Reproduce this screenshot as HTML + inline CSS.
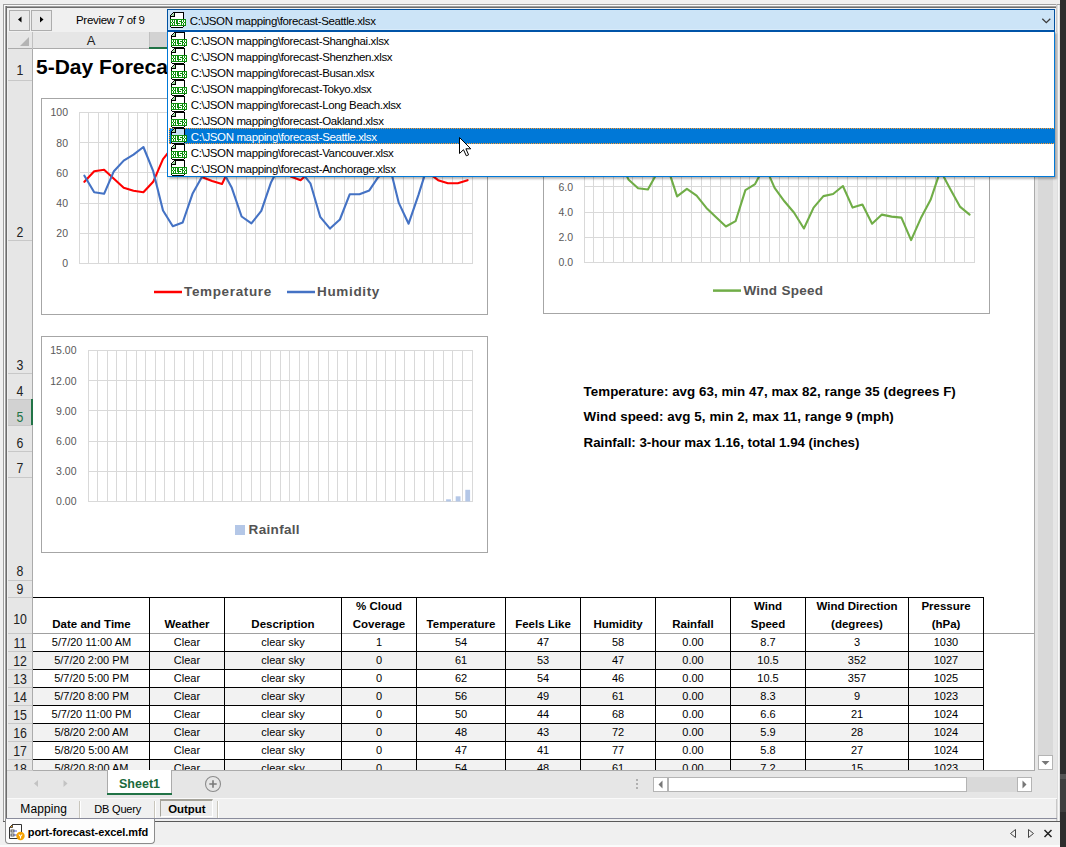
<!DOCTYPE html>
<html><head><meta charset="utf-8">
<style>
*{box-sizing:border-box}
html,body{margin:0;padding:0}
body{width:1066px;height:847px;background:#f0f0f0;position:relative;overflow:hidden;font-family:"Liberation Sans",sans-serif;color:#000}
.a{position:absolute}
.t{position:absolute;white-space:pre}
svg{position:absolute;overflow:visible}
</style></head><body>
<div class="a" style="left:1060px;top:0px;width:6px;height:847px;background:#2d2d2d;"></div>
<div class="a" style="left:1060px;top:774px;width:6px;height:5px;background:#545454;"></div>
<div class="a" style="left:1060px;top:779px;width:6px;height:33px;background:#3e3e3e;"></div>
<div class="a" style="left:3px;top:4px;width:1057px;height:1px;background:#a0a0a0;"></div>
<div class="a" style="left:3px;top:4px;width:1px;height:818px;background:#a0a0a0;"></div>
<div class="a" style="left:4px;top:5px;width:1055px;height:1px;background:#fafafa;"></div>
<div class="a" style="left:4px;top:5px;width:1px;height:816px;background:#fafafa;"></div>
<div class="a" style="left:5px;top:6px;width:1052px;height:1px;background:#a0a0a0;"></div>
<div class="a" style="left:5px;top:7px;width:1052px;height:1px;background:#6d6d6d;"></div>
<div class="a" style="left:5px;top:6px;width:1px;height:813px;background:#a0a0a0;"></div>
<div class="a" style="left:6px;top:6px;width:1px;height:813px;background:#6d6d6d;"></div>
<div class="a" style="left:1056px;top:4px;width:1px;height:818px;background:#c8c8c8;"></div>
<div class="a" style="left:1057px;top:5px;width:3px;height:816px;background:#f8f8f8;"></div>
<div class="a" style="left:1057px;top:5px;width:1px;height:816px;background:#dedede;"></div>
<div class="a" style="left:1059px;top:5px;width:1px;height:816px;background:#e2e2e2;"></div>
<div class="a" style="left:6px;top:818px;width:1051px;height:1px;background:#8f90a0;"></div>
<div class="a" style="left:3px;top:821px;width:1057px;height:1px;background:#5a5a5a;"></div>
<div class="a" style="left:0px;top:845px;width:1060px;height:2px;background:#fbfbfb;"></div>
<div class="a" style="left:9px;top:10px;width:21px;height:21px;background:#e9e9e9;border:1px solid #adadad"></div>
<div class="a" style="left:31px;top:10px;width:21px;height:21px;background:#e9e9e9;border:1px solid #adadad"></div>
<svg style="left:0;top:0" width="60" height="40"><path d="M21.5 16.5 L18 19.5 L21.5 22.5Z" fill="#000"/><path d="M40 16.5 L43.5 19.5 L40 22.5Z" fill="#000"/></svg>
<div class="t" style="left:76px;top:14.57px;font-size:11.5px;line-height:11.5px;font-weight:normal;color:#000;letter-spacing:-0.3px;">Preview 7 of 9</div>
<div class="a" style="left:8px;top:32px;width:1027px;height:17px;background:#e6e6e6;"></div>
<div class="a" style="left:8px;top:48px;width:1027px;height:1px;background:#ababab;"></div>
<svg style="left:8px;top:32px" width="25" height="17"><path d="M21 5 L21 14 L12 14Z" fill="#b4b4b4"/></svg>
<div class="a" style="left:32px;top:32px;width:1px;height:17px;background:#c0c0c0;"></div>
<div class="t" style="left:41.0px;width:100px;text-align:center;top:34.00px;font-size:13px;line-height:13px;font-weight:normal;color:#222;">A</div>
<div class="a" style="left:149px;top:32px;width:1px;height:16px;background:#c0c0c0;"></div>
<div class="a" style="left:150px;top:32px;width:74px;height:15px;background:#d2d2d2;"></div>
<div class="a" style="left:149px;top:47px;width:76px;height:2px;background:#217346;"></div>
<div class="a" style="left:8px;top:49px;width:24px;height:722px;background:#e6e6e6;"></div>
<div class="a" style="left:32px;top:49px;width:1px;height:722px;background:#ababab;"></div>
<div class="a" style="left:8px;top:80px;width:24px;height:1px;background:#c8c8c8;"></div>
<div class="t" style="left:8.3px;width:24px;text-align:center;top:63.15px;font-size:14px;line-height:14px;font-weight:normal;color:#222;transform:scaleX(0.88)">1</div>
<div class="a" style="left:8px;top:240px;width:24px;height:1px;background:#c8c8c8;"></div>
<div class="t" style="left:8.3px;width:24px;text-align:center;top:225.15px;font-size:14px;line-height:14px;font-weight:normal;color:#222;transform:scaleX(0.88)">2</div>
<div class="a" style="left:8px;top:373px;width:24px;height:1px;background:#c8c8c8;"></div>
<div class="t" style="left:8.3px;width:24px;text-align:center;top:357.65px;font-size:14px;line-height:14px;font-weight:normal;color:#222;transform:scaleX(0.88)">3</div>
<div class="a" style="left:8px;top:399px;width:24px;height:1px;background:#c8c8c8;"></div>
<div class="t" style="left:8.3px;width:24px;text-align:center;top:383.65px;font-size:14px;line-height:14px;font-weight:normal;color:#222;transform:scaleX(0.88)">4</div>
<div class="a" style="left:8px;top:425px;width:24px;height:1px;background:#c8c8c8;"></div>
<div class="a" style="left:8px;top:400px;width:23px;height:25px;background:#d2d2d2;"></div>
<div class="a" style="left:31px;top:399px;width:2px;height:26px;background:#217346;"></div>
<div class="t" style="left:8.3px;width:24px;text-align:center;top:409.95px;font-size:14px;line-height:14px;font-weight:normal;color:#217346;transform:scaleX(0.88)">5</div>
<div class="a" style="left:8px;top:451px;width:24px;height:1px;background:#c8c8c8;"></div>
<div class="t" style="left:8.3px;width:24px;text-align:center;top:435.75px;font-size:14px;line-height:14px;font-weight:normal;color:#222;transform:scaleX(0.88)">6</div>
<div class="a" style="left:8px;top:477px;width:24px;height:1px;background:#c8c8c8;"></div>
<div class="t" style="left:8.3px;width:24px;text-align:center;top:461.15px;font-size:14px;line-height:14px;font-weight:normal;color:#222;transform:scaleX(0.88)">7</div>
<div class="a" style="left:8px;top:580px;width:24px;height:1px;background:#c8c8c8;"></div>
<div class="t" style="left:8.3px;width:24px;text-align:center;top:564.15px;font-size:14px;line-height:14px;font-weight:normal;color:#222;transform:scaleX(0.88)">8</div>
<div class="a" style="left:8px;top:597px;width:24px;height:1px;background:#c8c8c8;"></div>
<div class="t" style="left:8.3px;width:24px;text-align:center;top:581.65px;font-size:14px;line-height:14px;font-weight:normal;color:#222;transform:scaleX(0.88)">9</div>
<div class="a" style="left:8px;top:633px;width:24px;height:1px;background:#c8c8c8;"></div>
<div class="t" style="left:8.3px;width:24px;text-align:center;top:612.35px;font-size:14px;line-height:14px;font-weight:normal;color:#222;transform:scaleX(0.88)">10</div>
<div class="a" style="left:8px;top:651px;width:24px;height:1px;background:#c8c8c8;"></div>
<div class="t" style="left:8.3px;width:24px;text-align:center;top:636.15px;font-size:14px;line-height:14px;font-weight:normal;color:#222;transform:scaleX(0.88)">11</div>
<div class="a" style="left:8px;top:669px;width:24px;height:1px;background:#c8c8c8;"></div>
<div class="t" style="left:8.3px;width:24px;text-align:center;top:653.65px;font-size:14px;line-height:14px;font-weight:normal;color:#222;transform:scaleX(0.88)">12</div>
<div class="a" style="left:8px;top:687px;width:24px;height:1px;background:#c8c8c8;"></div>
<div class="t" style="left:8.3px;width:24px;text-align:center;top:671.65px;font-size:14px;line-height:14px;font-weight:normal;color:#222;transform:scaleX(0.88)">13</div>
<div class="a" style="left:8px;top:705px;width:24px;height:1px;background:#c8c8c8;"></div>
<div class="t" style="left:8.3px;width:24px;text-align:center;top:689.65px;font-size:14px;line-height:14px;font-weight:normal;color:#222;transform:scaleX(0.88)">14</div>
<div class="a" style="left:8px;top:723px;width:24px;height:1px;background:#c8c8c8;"></div>
<div class="t" style="left:8.3px;width:24px;text-align:center;top:707.65px;font-size:14px;line-height:14px;font-weight:normal;color:#222;transform:scaleX(0.88)">15</div>
<div class="a" style="left:8px;top:741px;width:24px;height:1px;background:#c8c8c8;"></div>
<div class="t" style="left:8.3px;width:24px;text-align:center;top:725.65px;font-size:14px;line-height:14px;font-weight:normal;color:#222;transform:scaleX(0.88)">16</div>
<div class="a" style="left:8px;top:759px;width:24px;height:1px;background:#c8c8c8;"></div>
<div class="t" style="left:8.3px;width:24px;text-align:center;top:743.65px;font-size:14px;line-height:14px;font-weight:normal;color:#222;transform:scaleX(0.88)">17</div>
<div class="a" style="left:8px;top:777px;width:24px;height:1px;background:#c8c8c8;"></div>
<div class="t" style="left:8.3px;width:24px;text-align:center;top:761.65px;font-size:14px;line-height:14px;font-weight:normal;color:#222;transform:scaleX(0.88)">18</div>
<div class="a" style="left:33px;top:49px;width:1002px;height:721px;background:#fff;"></div>
<div class="a" style="left:1034px;top:49px;width:1px;height:722px;background:#ababab;"></div>
<div class="a" style="left:33px;top:770px;width:1002px;height:1px;background:#ababab;"></div>
<div class="t" style="left:36px;top:56.32px;font-size:21px;line-height:21px;font-weight:bold;color:#000;">5-Day Forecast for Seattle</div>
<svg style="left:0;top:0" width="1066" height="847"><rect x="41.5" y="98.5" width="446" height="216" fill="#fff" stroke="#a6a6a6"/><rect x="543.5" y="97.5" width="446" height="216" fill="#fff" stroke="#a6a6a6"/><rect x="41.5" y="336.5" width="446" height="216" fill="#fff" stroke="#a6a6a6"/><path d="M79.5 112V264M88.5 112V264M98.5 112V264M108.5 112V264M118.5 112V264M128.5 112V264M137.5 112V264M147.5 112V264M157.5 112V264M167.5 112V264M177.5 112V264M187.5 112V264M196.5 112V264M206.5 112V264M216.5 112V264M226.5 112V264M236.5 112V264M246.5 112V264M255.5 112V264M265.5 112V264M275.5 112V264M285.5 112V264M295.5 112V264M304.5 112V264M314.5 112V264M324.5 112V264M334.5 112V264M344.5 112V264M354.5 112V264M363.5 112V264M373.5 112V264M383.5 112V264M393.5 112V264M403.5 112V264M413.5 112V264M422.5 112V264M432.5 112V264M442.5 112V264M452.5 112V264M462.5 112V264M472.5 112V264M79 112.5H473M79 142.5H473M79 172.5H473M79 203.5H473M79 233.5H473M79 263.5H473M584.5 111V263M593.5 111V263M603.5 111V263M613.5 111V263M623.5 111V263M632.5 111V263M642.5 111V263M652.5 111V263M662.5 111V263M671.5 111V263M681.5 111V263M691.5 111V263M701.5 111V263M710.5 111V263M720.5 111V263M730.5 111V263M740.5 111V263M749.5 111V263M759.5 111V263M769.5 111V263M779.5 111V263M788.5 111V263M798.5 111V263M808.5 111V263M818.5 111V263M827.5 111V263M837.5 111V263M847.5 111V263M857.5 111V263M866.5 111V263M876.5 111V263M886.5 111V263M896.5 111V263M905.5 111V263M915.5 111V263M925.5 111V263M935.5 111V263M944.5 111V263M954.5 111V263M964.5 111V263M974.5 111V263M584 111.5H975M584 136.5H975M584 161.5H975M584 186.5H975M584 212.5H975M584 237.5H975M584 262.5H975M88.5 350V502M97.5 350V502M107.5 350V502M116.5 350V502M126.5 350V502M136.5 350V502M145.5 350V502M155.5 350V502M164.5 350V502M174.5 350V502M184.5 350V502M193.5 350V502M203.5 350V502M212.5 350V502M222.5 350V502M232.5 350V502M241.5 350V502M251.5 350V502M260.5 350V502M270.5 350V502M280.5 350V502M289.5 350V502M299.5 350V502M308.5 350V502M318.5 350V502M328.5 350V502M337.5 350V502M347.5 350V502M356.5 350V502M366.5 350V502M376.5 350V502M385.5 350V502M395.5 350V502M404.5 350V502M414.5 350V502M424.5 350V502M433.5 350V502M443.5 350V502M452.5 350V502M462.5 350V502M472.5 350V502M88 350.5H473M88 380.5H473M88 410.5H473M88 441.5H473M88 471.5H473M88 501.5H473" stroke="#d9d9d9" stroke-width="1" fill="none"/><polyline points="84.4,181.8 94.2,171.2 104.1,169.7 113.9,178.7 123.7,187.8 133.5,190.8 143.4,192.3 153.2,181.8 163.0,159.1 172.8,147.0 182.7,142.5 192.5,144.0 202.3,177.2 212.1,181.0 222.0,184.0 231.8,163.6 241.6,150.1 251.4,142.5 261.3,139.5 271.1,151.6 280.9,169.7 290.7,176.5 300.6,180.2 310.4,171.2 320.2,157.6 330.0,148.5 339.9,145.5 349.7,154.6 359.5,166.7 369.3,172.7 379.2,176.5 389.0,169.7 398.8,157.6 408.6,150.1 418.5,156.1 428.3,172.7 438.1,180.2 447.9,183.3 457.8,183.3 467.6,180.2" fill="none" stroke="#ff0000" stroke-width="2.1" stroke-linejoin="round" stroke-linecap="round"/><polyline points="84.4,175.7 94.2,192.3 104.1,193.8 113.9,171.2 123.7,160.6 133.5,154.6 143.4,147.0 153.2,171.2 163.0,210.5 172.8,226.3 182.7,222.5 192.5,193.8 202.3,176.2 212.1,163.6 222.0,169.7 231.8,187.8 241.6,216.5 251.4,223.4 261.3,210.9 271.1,182.2 280.9,163.6 290.7,160.6 300.6,171.2 310.4,183.3 320.2,216.8 330.0,228.6 339.9,219.5 349.7,194.3 359.5,194.3 369.3,190.4 379.2,175.7 389.0,163.6 398.8,202.9 408.6,223.7 418.5,194.9 428.3,163.6 438.1,157.6 447.9,150.1 457.8,148.5 467.6,151.6" fill="none" stroke="#4472c4" stroke-width="2.1" stroke-linejoin="round" stroke-linecap="round"/><polyline points="589.4,153.0 599.1,130.4 608.9,130.4 618.6,158.1 628.4,179.4 638.1,188.3 647.9,189.5 657.6,171.9 667.4,166.9 677.1,196.4 686.9,188.9 696.6,195.6 706.4,207.9 716.1,217.3 725.9,226.5 735.6,221.2 745.4,190.1 755.1,184.1 764.9,165.6 774.6,187.8 784.4,201.3 794.1,212.8 803.9,228.5 813.6,207.6 823.4,196.1 833.1,194.0 842.9,186.0 852.6,207.6 862.4,204.5 872.1,223.7 881.9,214.6 891.6,216.6 901.4,217.6 911.1,240.1 920.9,218.1 930.6,199.8 940.4,170.6 950.1,188.8 959.9,206.6 969.6,214.6" fill="none" stroke="#70ad47" stroke-width="2.1" stroke-linejoin="round" stroke-linecap="round"/><rect x="446.1" y="499.3" width="4.8" height="2.2" fill="#b4c7e7"/><rect x="455.7" y="496.3" width="4.8" height="5.2" fill="#b4c7e7"/><rect x="465.3" y="489.8" width="4.8" height="11.7" fill="#b4c7e7"/><path d="M154 292H182" stroke="#ff0000" stroke-width="2.5"/><path d="M287 292H315" stroke="#4472c4" stroke-width="2.5"/><path d="M713 290.6H741" stroke="#70ad47" stroke-width="2.5"/><rect x="235" y="525" width="10" height="10" fill="#b4c7e7"/></svg>
<div class="t" style="left:28px;width:40px;text-align:right;top:107.41px;font-size:10.5px;line-height:10.5px;font-weight:normal;color:#595959;">100</div>
<div class="t" style="left:28px;width:40px;text-align:right;top:137.61px;font-size:10.5px;line-height:10.5px;font-weight:normal;color:#595959;">80</div>
<div class="t" style="left:28px;width:40px;text-align:right;top:167.81px;font-size:10.5px;line-height:10.5px;font-weight:normal;color:#595959;">60</div>
<div class="t" style="left:28px;width:40px;text-align:right;top:198.01px;font-size:10.5px;line-height:10.5px;font-weight:normal;color:#595959;">40</div>
<div class="t" style="left:28px;width:40px;text-align:right;top:228.21px;font-size:10.5px;line-height:10.5px;font-weight:normal;color:#595959;">20</div>
<div class="t" style="left:28px;width:40px;text-align:right;top:258.41px;font-size:10.5px;line-height:10.5px;font-weight:normal;color:#595959;">0</div>
<div class="t" style="left:533px;width:40px;text-align:right;top:106.41px;font-size:10.5px;line-height:10.5px;font-weight:normal;color:#595959;">12.0</div>
<div class="t" style="left:533px;width:40px;text-align:right;top:131.58px;font-size:10.5px;line-height:10.5px;font-weight:normal;color:#595959;">10.0</div>
<div class="t" style="left:533px;width:40px;text-align:right;top:156.75px;font-size:10.5px;line-height:10.5px;font-weight:normal;color:#595959;">8.0</div>
<div class="t" style="left:533px;width:40px;text-align:right;top:181.91px;font-size:10.5px;line-height:10.5px;font-weight:normal;color:#595959;">6.0</div>
<div class="t" style="left:533px;width:40px;text-align:right;top:207.08px;font-size:10.5px;line-height:10.5px;font-weight:normal;color:#595959;">4.0</div>
<div class="t" style="left:533px;width:40px;text-align:right;top:232.25px;font-size:10.5px;line-height:10.5px;font-weight:normal;color:#595959;">2.0</div>
<div class="t" style="left:533px;width:40px;text-align:right;top:257.41px;font-size:10.5px;line-height:10.5px;font-weight:normal;color:#595959;">0.0</div>
<div class="t" style="left:36.5px;width:40px;text-align:right;top:345.41px;font-size:10.5px;line-height:10.5px;font-weight:normal;color:#595959;">15.00</div>
<div class="t" style="left:36.5px;width:40px;text-align:right;top:375.61px;font-size:10.5px;line-height:10.5px;font-weight:normal;color:#595959;">12.00</div>
<div class="t" style="left:36.5px;width:40px;text-align:right;top:405.81px;font-size:10.5px;line-height:10.5px;font-weight:normal;color:#595959;">9.00</div>
<div class="t" style="left:36.5px;width:40px;text-align:right;top:436.01px;font-size:10.5px;line-height:10.5px;font-weight:normal;color:#595959;">6.00</div>
<div class="t" style="left:36.5px;width:40px;text-align:right;top:466.21px;font-size:10.5px;line-height:10.5px;font-weight:normal;color:#595959;">3.00</div>
<div class="t" style="left:36.5px;width:40px;text-align:right;top:496.41px;font-size:10.5px;line-height:10.5px;font-weight:normal;color:#595959;">0.00</div>
<div class="t" style="left:184px;top:285.27px;font-size:13.5px;line-height:13.5px;font-weight:bold;color:#535353;letter-spacing:0.65px;">Temperature</div>
<div class="t" style="left:317px;top:285.27px;font-size:13.5px;line-height:13.5px;font-weight:bold;color:#535353;letter-spacing:0.66px;">Humidity</div>
<div class="t" style="left:743.4px;top:284.17px;font-size:13.5px;line-height:13.5px;font-weight:bold;color:#535353;letter-spacing:0.28px;">Wind Speed</div>
<div class="t" style="left:248.6px;top:523.47px;font-size:13.5px;line-height:13.5px;font-weight:bold;color:#535353;letter-spacing:0.32px;">Rainfall</div>
<div class="t" style="left:583.6px;top:384.82px;font-size:13.33px;line-height:13.33px;font-weight:bold;color:#000;letter-spacing:0.05px;">Temperature: avg 63, min 47, max 82, range 35 (degrees F)</div>
<div class="t" style="left:583.6px;top:410.22px;font-size:13.33px;line-height:13.33px;font-weight:bold;color:#000;letter-spacing:0.08px;">Wind speed: avg 5, min 2, max 11, range 9 (mph)</div>
<div class="t" style="left:583.6px;top:435.52px;font-size:13.33px;line-height:13.33px;font-weight:bold;color:#000;letter-spacing:-0.045px;">Rainfall: 3-hour max 1.16, total 1.94 (inches)</div>
<div class="a" style="left:33px;top:652px;width:116px;height:17px;background:#f2f2f2;"></div>
<div class="a" style="left:150px;top:652px;width:74px;height:17px;background:#f2f2f2;"></div>
<div class="a" style="left:225px;top:652px;width:116px;height:17px;background:#f2f2f2;"></div>
<div class="a" style="left:342px;top:652px;width:74px;height:17px;background:#f2f2f2;"></div>
<div class="a" style="left:417px;top:652px;width:88px;height:17px;background:#f2f2f2;"></div>
<div class="a" style="left:506px;top:652px;width:74px;height:17px;background:#f2f2f2;"></div>
<div class="a" style="left:581px;top:652px;width:74px;height:17px;background:#f2f2f2;"></div>
<div class="a" style="left:656px;top:652px;width:74px;height:17px;background:#f2f2f2;"></div>
<div class="a" style="left:731px;top:652px;width:74px;height:17px;background:#f2f2f2;"></div>
<div class="a" style="left:806px;top:652px;width:102px;height:17px;background:#f2f2f2;"></div>
<div class="a" style="left:909px;top:652px;width:74px;height:17px;background:#f2f2f2;"></div>
<div class="a" style="left:33px;top:688px;width:116px;height:17px;background:#f2f2f2;"></div>
<div class="a" style="left:150px;top:688px;width:74px;height:17px;background:#f2f2f2;"></div>
<div class="a" style="left:225px;top:688px;width:116px;height:17px;background:#f2f2f2;"></div>
<div class="a" style="left:342px;top:688px;width:74px;height:17px;background:#f2f2f2;"></div>
<div class="a" style="left:417px;top:688px;width:88px;height:17px;background:#f2f2f2;"></div>
<div class="a" style="left:506px;top:688px;width:74px;height:17px;background:#f2f2f2;"></div>
<div class="a" style="left:581px;top:688px;width:74px;height:17px;background:#f2f2f2;"></div>
<div class="a" style="left:656px;top:688px;width:74px;height:17px;background:#f2f2f2;"></div>
<div class="a" style="left:731px;top:688px;width:74px;height:17px;background:#f2f2f2;"></div>
<div class="a" style="left:806px;top:688px;width:102px;height:17px;background:#f2f2f2;"></div>
<div class="a" style="left:909px;top:688px;width:74px;height:17px;background:#f2f2f2;"></div>
<div class="a" style="left:33px;top:724px;width:116px;height:17px;background:#f2f2f2;"></div>
<div class="a" style="left:150px;top:724px;width:74px;height:17px;background:#f2f2f2;"></div>
<div class="a" style="left:225px;top:724px;width:116px;height:17px;background:#f2f2f2;"></div>
<div class="a" style="left:342px;top:724px;width:74px;height:17px;background:#f2f2f2;"></div>
<div class="a" style="left:417px;top:724px;width:88px;height:17px;background:#f2f2f2;"></div>
<div class="a" style="left:506px;top:724px;width:74px;height:17px;background:#f2f2f2;"></div>
<div class="a" style="left:581px;top:724px;width:74px;height:17px;background:#f2f2f2;"></div>
<div class="a" style="left:656px;top:724px;width:74px;height:17px;background:#f2f2f2;"></div>
<div class="a" style="left:731px;top:724px;width:74px;height:17px;background:#f2f2f2;"></div>
<div class="a" style="left:806px;top:724px;width:102px;height:17px;background:#f2f2f2;"></div>
<div class="a" style="left:909px;top:724px;width:74px;height:17px;background:#f2f2f2;"></div>
<div class="a" style="left:33px;top:760px;width:116px;height:17px;background:#f2f2f2;"></div>
<div class="a" style="left:150px;top:760px;width:74px;height:17px;background:#f2f2f2;"></div>
<div class="a" style="left:225px;top:760px;width:116px;height:17px;background:#f2f2f2;"></div>
<div class="a" style="left:342px;top:760px;width:74px;height:17px;background:#f2f2f2;"></div>
<div class="a" style="left:417px;top:760px;width:88px;height:17px;background:#f2f2f2;"></div>
<div class="a" style="left:506px;top:760px;width:74px;height:17px;background:#f2f2f2;"></div>
<div class="a" style="left:581px;top:760px;width:74px;height:17px;background:#f2f2f2;"></div>
<div class="a" style="left:656px;top:760px;width:74px;height:17px;background:#f2f2f2;"></div>
<div class="a" style="left:731px;top:760px;width:74px;height:17px;background:#f2f2f2;"></div>
<div class="a" style="left:806px;top:760px;width:102px;height:17px;background:#f2f2f2;"></div>
<div class="a" style="left:909px;top:760px;width:74px;height:17px;background:#f2f2f2;"></div>
<div class="a" style="left:33px;top:597px;width:951px;height:1px;background:#000;"></div>
<div class="a" style="left:33px;top:651px;width:951px;height:1px;background:#000;"></div>
<div class="a" style="left:33px;top:669px;width:951px;height:1px;background:#000;"></div>
<div class="a" style="left:33px;top:687px;width:951px;height:1px;background:#000;"></div>
<div class="a" style="left:33px;top:705px;width:951px;height:1px;background:#000;"></div>
<div class="a" style="left:33px;top:723px;width:951px;height:1px;background:#000;"></div>
<div class="a" style="left:33px;top:741px;width:951px;height:1px;background:#000;"></div>
<div class="a" style="left:33px;top:759px;width:951px;height:1px;background:#000;"></div>
<div class="a" style="left:33px;top:633px;width:1001px;height:1px;background:#a0a0a0;"></div>
<div class="a" style="left:149px;top:597px;width:1px;height:173px;background:#000;"></div>
<div class="a" style="left:224px;top:597px;width:1px;height:173px;background:#000;"></div>
<div class="a" style="left:341px;top:597px;width:1px;height:173px;background:#000;"></div>
<div class="a" style="left:416px;top:597px;width:1px;height:173px;background:#000;"></div>
<div class="a" style="left:505px;top:597px;width:1px;height:173px;background:#000;"></div>
<div class="a" style="left:580px;top:597px;width:1px;height:173px;background:#000;"></div>
<div class="a" style="left:655px;top:597px;width:1px;height:173px;background:#000;"></div>
<div class="a" style="left:730px;top:597px;width:1px;height:173px;background:#000;"></div>
<div class="a" style="left:805px;top:597px;width:1px;height:173px;background:#000;"></div>
<div class="a" style="left:908px;top:597px;width:1px;height:173px;background:#000;"></div>
<div class="a" style="left:983px;top:597px;width:1px;height:173px;background:#000;"></div>
<div class="t" style="left:11.5px;width:160px;text-align:center;top:618.87px;font-size:11.5px;line-height:11.5px;font-weight:bold;color:#000;">Date and Time</div>
<div class="t" style="left:107.0px;width:160px;text-align:center;top:618.87px;font-size:11.5px;line-height:11.5px;font-weight:bold;color:#000;">Weather</div>
<div class="t" style="left:203.0px;width:160px;text-align:center;top:618.87px;font-size:11.5px;line-height:11.5px;font-weight:bold;color:#000;">Description</div>
<div class="t" style="left:299.0px;width:160px;text-align:center;top:600.87px;font-size:11.5px;line-height:11.5px;font-weight:bold;color:#000;">% Cloud</div>
<div class="t" style="left:299.0px;width:160px;text-align:center;top:618.87px;font-size:11.5px;line-height:11.5px;font-weight:bold;color:#000;">Coverage</div>
<div class="t" style="left:381.0px;width:160px;text-align:center;top:618.87px;font-size:11.5px;line-height:11.5px;font-weight:bold;color:#000;">Temperature</div>
<div class="t" style="left:463.0px;width:160px;text-align:center;top:618.87px;font-size:11.5px;line-height:11.5px;font-weight:bold;color:#000;">Feels Like</div>
<div class="t" style="left:538.0px;width:160px;text-align:center;top:618.87px;font-size:11.5px;line-height:11.5px;font-weight:bold;color:#000;">Humidity</div>
<div class="t" style="left:613.0px;width:160px;text-align:center;top:618.87px;font-size:11.5px;line-height:11.5px;font-weight:bold;color:#000;">Rainfall</div>
<div class="t" style="left:688.0px;width:160px;text-align:center;top:600.87px;font-size:11.5px;line-height:11.5px;font-weight:bold;color:#000;">Wind</div>
<div class="t" style="left:688.0px;width:160px;text-align:center;top:618.87px;font-size:11.5px;line-height:11.5px;font-weight:bold;color:#000;">Speed</div>
<div class="t" style="left:777.0px;width:160px;text-align:center;top:600.87px;font-size:11.5px;line-height:11.5px;font-weight:bold;color:#000;">Wind Direction</div>
<div class="t" style="left:777.0px;width:160px;text-align:center;top:618.87px;font-size:11.5px;line-height:11.5px;font-weight:bold;color:#000;">(degrees)</div>
<div class="t" style="left:866.0px;width:160px;text-align:center;top:600.87px;font-size:11.5px;line-height:11.5px;font-weight:bold;color:#000;">Pressure</div>
<div class="t" style="left:866.0px;width:160px;text-align:center;top:618.87px;font-size:11.5px;line-height:11.5px;font-weight:bold;color:#000;">(hPa)</div>
<div class="t" style="left:11.5px;width:160px;text-align:center;top:636.99px;font-size:11px;line-height:11px;font-weight:normal;color:#000;">5/7/20 11:00 AM</div>
<div class="t" style="left:107.0px;width:160px;text-align:center;top:636.99px;font-size:11px;line-height:11px;font-weight:normal;color:#000;">Clear</div>
<div class="t" style="left:203.0px;width:160px;text-align:center;top:636.99px;font-size:11px;line-height:11px;font-weight:normal;color:#000;">clear sky</div>
<div class="t" style="left:299.0px;width:160px;text-align:center;top:636.99px;font-size:11px;line-height:11px;font-weight:normal;color:#000;">1</div>
<div class="t" style="left:381.0px;width:160px;text-align:center;top:636.99px;font-size:11px;line-height:11px;font-weight:normal;color:#000;">54</div>
<div class="t" style="left:463.0px;width:160px;text-align:center;top:636.99px;font-size:11px;line-height:11px;font-weight:normal;color:#000;">47</div>
<div class="t" style="left:538.0px;width:160px;text-align:center;top:636.99px;font-size:11px;line-height:11px;font-weight:normal;color:#000;">58</div>
<div class="t" style="left:613.0px;width:160px;text-align:center;top:636.99px;font-size:11px;line-height:11px;font-weight:normal;color:#000;">0.00</div>
<div class="t" style="left:688.0px;width:160px;text-align:center;top:636.99px;font-size:11px;line-height:11px;font-weight:normal;color:#000;">8.7</div>
<div class="t" style="left:777.0px;width:160px;text-align:center;top:636.99px;font-size:11px;line-height:11px;font-weight:normal;color:#000;">3</div>
<div class="t" style="left:866.0px;width:160px;text-align:center;top:636.99px;font-size:11px;line-height:11px;font-weight:normal;color:#000;">1030</div>
<div class="t" style="left:11.5px;width:160px;text-align:center;top:654.99px;font-size:11px;line-height:11px;font-weight:normal;color:#000;">5/7/20 2:00 PM</div>
<div class="t" style="left:107.0px;width:160px;text-align:center;top:654.99px;font-size:11px;line-height:11px;font-weight:normal;color:#000;">Clear</div>
<div class="t" style="left:203.0px;width:160px;text-align:center;top:654.99px;font-size:11px;line-height:11px;font-weight:normal;color:#000;">clear sky</div>
<div class="t" style="left:299.0px;width:160px;text-align:center;top:654.99px;font-size:11px;line-height:11px;font-weight:normal;color:#000;">0</div>
<div class="t" style="left:381.0px;width:160px;text-align:center;top:654.99px;font-size:11px;line-height:11px;font-weight:normal;color:#000;">61</div>
<div class="t" style="left:463.0px;width:160px;text-align:center;top:654.99px;font-size:11px;line-height:11px;font-weight:normal;color:#000;">53</div>
<div class="t" style="left:538.0px;width:160px;text-align:center;top:654.99px;font-size:11px;line-height:11px;font-weight:normal;color:#000;">47</div>
<div class="t" style="left:613.0px;width:160px;text-align:center;top:654.99px;font-size:11px;line-height:11px;font-weight:normal;color:#000;">0.00</div>
<div class="t" style="left:688.0px;width:160px;text-align:center;top:654.99px;font-size:11px;line-height:11px;font-weight:normal;color:#000;">10.5</div>
<div class="t" style="left:777.0px;width:160px;text-align:center;top:654.99px;font-size:11px;line-height:11px;font-weight:normal;color:#000;">352</div>
<div class="t" style="left:866.0px;width:160px;text-align:center;top:654.99px;font-size:11px;line-height:11px;font-weight:normal;color:#000;">1027</div>
<div class="t" style="left:11.5px;width:160px;text-align:center;top:672.99px;font-size:11px;line-height:11px;font-weight:normal;color:#000;">5/7/20 5:00 PM</div>
<div class="t" style="left:107.0px;width:160px;text-align:center;top:672.99px;font-size:11px;line-height:11px;font-weight:normal;color:#000;">Clear</div>
<div class="t" style="left:203.0px;width:160px;text-align:center;top:672.99px;font-size:11px;line-height:11px;font-weight:normal;color:#000;">clear sky</div>
<div class="t" style="left:299.0px;width:160px;text-align:center;top:672.99px;font-size:11px;line-height:11px;font-weight:normal;color:#000;">0</div>
<div class="t" style="left:381.0px;width:160px;text-align:center;top:672.99px;font-size:11px;line-height:11px;font-weight:normal;color:#000;">62</div>
<div class="t" style="left:463.0px;width:160px;text-align:center;top:672.99px;font-size:11px;line-height:11px;font-weight:normal;color:#000;">54</div>
<div class="t" style="left:538.0px;width:160px;text-align:center;top:672.99px;font-size:11px;line-height:11px;font-weight:normal;color:#000;">46</div>
<div class="t" style="left:613.0px;width:160px;text-align:center;top:672.99px;font-size:11px;line-height:11px;font-weight:normal;color:#000;">0.00</div>
<div class="t" style="left:688.0px;width:160px;text-align:center;top:672.99px;font-size:11px;line-height:11px;font-weight:normal;color:#000;">10.5</div>
<div class="t" style="left:777.0px;width:160px;text-align:center;top:672.99px;font-size:11px;line-height:11px;font-weight:normal;color:#000;">357</div>
<div class="t" style="left:866.0px;width:160px;text-align:center;top:672.99px;font-size:11px;line-height:11px;font-weight:normal;color:#000;">1025</div>
<div class="t" style="left:11.5px;width:160px;text-align:center;top:690.99px;font-size:11px;line-height:11px;font-weight:normal;color:#000;">5/7/20 8:00 PM</div>
<div class="t" style="left:107.0px;width:160px;text-align:center;top:690.99px;font-size:11px;line-height:11px;font-weight:normal;color:#000;">Clear</div>
<div class="t" style="left:203.0px;width:160px;text-align:center;top:690.99px;font-size:11px;line-height:11px;font-weight:normal;color:#000;">clear sky</div>
<div class="t" style="left:299.0px;width:160px;text-align:center;top:690.99px;font-size:11px;line-height:11px;font-weight:normal;color:#000;">0</div>
<div class="t" style="left:381.0px;width:160px;text-align:center;top:690.99px;font-size:11px;line-height:11px;font-weight:normal;color:#000;">56</div>
<div class="t" style="left:463.0px;width:160px;text-align:center;top:690.99px;font-size:11px;line-height:11px;font-weight:normal;color:#000;">49</div>
<div class="t" style="left:538.0px;width:160px;text-align:center;top:690.99px;font-size:11px;line-height:11px;font-weight:normal;color:#000;">61</div>
<div class="t" style="left:613.0px;width:160px;text-align:center;top:690.99px;font-size:11px;line-height:11px;font-weight:normal;color:#000;">0.00</div>
<div class="t" style="left:688.0px;width:160px;text-align:center;top:690.99px;font-size:11px;line-height:11px;font-weight:normal;color:#000;">8.3</div>
<div class="t" style="left:777.0px;width:160px;text-align:center;top:690.99px;font-size:11px;line-height:11px;font-weight:normal;color:#000;">9</div>
<div class="t" style="left:866.0px;width:160px;text-align:center;top:690.99px;font-size:11px;line-height:11px;font-weight:normal;color:#000;">1023</div>
<div class="t" style="left:11.5px;width:160px;text-align:center;top:708.99px;font-size:11px;line-height:11px;font-weight:normal;color:#000;">5/7/20 11:00 PM</div>
<div class="t" style="left:107.0px;width:160px;text-align:center;top:708.99px;font-size:11px;line-height:11px;font-weight:normal;color:#000;">Clear</div>
<div class="t" style="left:203.0px;width:160px;text-align:center;top:708.99px;font-size:11px;line-height:11px;font-weight:normal;color:#000;">clear sky</div>
<div class="t" style="left:299.0px;width:160px;text-align:center;top:708.99px;font-size:11px;line-height:11px;font-weight:normal;color:#000;">0</div>
<div class="t" style="left:381.0px;width:160px;text-align:center;top:708.99px;font-size:11px;line-height:11px;font-weight:normal;color:#000;">50</div>
<div class="t" style="left:463.0px;width:160px;text-align:center;top:708.99px;font-size:11px;line-height:11px;font-weight:normal;color:#000;">44</div>
<div class="t" style="left:538.0px;width:160px;text-align:center;top:708.99px;font-size:11px;line-height:11px;font-weight:normal;color:#000;">68</div>
<div class="t" style="left:613.0px;width:160px;text-align:center;top:708.99px;font-size:11px;line-height:11px;font-weight:normal;color:#000;">0.00</div>
<div class="t" style="left:688.0px;width:160px;text-align:center;top:708.99px;font-size:11px;line-height:11px;font-weight:normal;color:#000;">6.6</div>
<div class="t" style="left:777.0px;width:160px;text-align:center;top:708.99px;font-size:11px;line-height:11px;font-weight:normal;color:#000;">21</div>
<div class="t" style="left:866.0px;width:160px;text-align:center;top:708.99px;font-size:11px;line-height:11px;font-weight:normal;color:#000;">1024</div>
<div class="t" style="left:11.5px;width:160px;text-align:center;top:726.99px;font-size:11px;line-height:11px;font-weight:normal;color:#000;">5/8/20 2:00 AM</div>
<div class="t" style="left:107.0px;width:160px;text-align:center;top:726.99px;font-size:11px;line-height:11px;font-weight:normal;color:#000;">Clear</div>
<div class="t" style="left:203.0px;width:160px;text-align:center;top:726.99px;font-size:11px;line-height:11px;font-weight:normal;color:#000;">clear sky</div>
<div class="t" style="left:299.0px;width:160px;text-align:center;top:726.99px;font-size:11px;line-height:11px;font-weight:normal;color:#000;">0</div>
<div class="t" style="left:381.0px;width:160px;text-align:center;top:726.99px;font-size:11px;line-height:11px;font-weight:normal;color:#000;">48</div>
<div class="t" style="left:463.0px;width:160px;text-align:center;top:726.99px;font-size:11px;line-height:11px;font-weight:normal;color:#000;">43</div>
<div class="t" style="left:538.0px;width:160px;text-align:center;top:726.99px;font-size:11px;line-height:11px;font-weight:normal;color:#000;">72</div>
<div class="t" style="left:613.0px;width:160px;text-align:center;top:726.99px;font-size:11px;line-height:11px;font-weight:normal;color:#000;">0.00</div>
<div class="t" style="left:688.0px;width:160px;text-align:center;top:726.99px;font-size:11px;line-height:11px;font-weight:normal;color:#000;">5.9</div>
<div class="t" style="left:777.0px;width:160px;text-align:center;top:726.99px;font-size:11px;line-height:11px;font-weight:normal;color:#000;">28</div>
<div class="t" style="left:866.0px;width:160px;text-align:center;top:726.99px;font-size:11px;line-height:11px;font-weight:normal;color:#000;">1024</div>
<div class="t" style="left:11.5px;width:160px;text-align:center;top:744.99px;font-size:11px;line-height:11px;font-weight:normal;color:#000;">5/8/20 5:00 AM</div>
<div class="t" style="left:107.0px;width:160px;text-align:center;top:744.99px;font-size:11px;line-height:11px;font-weight:normal;color:#000;">Clear</div>
<div class="t" style="left:203.0px;width:160px;text-align:center;top:744.99px;font-size:11px;line-height:11px;font-weight:normal;color:#000;">clear sky</div>
<div class="t" style="left:299.0px;width:160px;text-align:center;top:744.99px;font-size:11px;line-height:11px;font-weight:normal;color:#000;">0</div>
<div class="t" style="left:381.0px;width:160px;text-align:center;top:744.99px;font-size:11px;line-height:11px;font-weight:normal;color:#000;">47</div>
<div class="t" style="left:463.0px;width:160px;text-align:center;top:744.99px;font-size:11px;line-height:11px;font-weight:normal;color:#000;">41</div>
<div class="t" style="left:538.0px;width:160px;text-align:center;top:744.99px;font-size:11px;line-height:11px;font-weight:normal;color:#000;">77</div>
<div class="t" style="left:613.0px;width:160px;text-align:center;top:744.99px;font-size:11px;line-height:11px;font-weight:normal;color:#000;">0.00</div>
<div class="t" style="left:688.0px;width:160px;text-align:center;top:744.99px;font-size:11px;line-height:11px;font-weight:normal;color:#000;">5.8</div>
<div class="t" style="left:777.0px;width:160px;text-align:center;top:744.99px;font-size:11px;line-height:11px;font-weight:normal;color:#000;">27</div>
<div class="t" style="left:866.0px;width:160px;text-align:center;top:744.99px;font-size:11px;line-height:11px;font-weight:normal;color:#000;">1024</div>
<div class="t" style="left:11.5px;width:160px;text-align:center;top:762.99px;font-size:11px;line-height:11px;font-weight:normal;color:#000;">5/8/20 8:00 AM</div>
<div class="t" style="left:107.0px;width:160px;text-align:center;top:762.99px;font-size:11px;line-height:11px;font-weight:normal;color:#000;">Clear</div>
<div class="t" style="left:203.0px;width:160px;text-align:center;top:762.99px;font-size:11px;line-height:11px;font-weight:normal;color:#000;">clear sky</div>
<div class="t" style="left:299.0px;width:160px;text-align:center;top:762.99px;font-size:11px;line-height:11px;font-weight:normal;color:#000;">0</div>
<div class="t" style="left:381.0px;width:160px;text-align:center;top:762.99px;font-size:11px;line-height:11px;font-weight:normal;color:#000;">54</div>
<div class="t" style="left:463.0px;width:160px;text-align:center;top:762.99px;font-size:11px;line-height:11px;font-weight:normal;color:#000;">48</div>
<div class="t" style="left:538.0px;width:160px;text-align:center;top:762.99px;font-size:11px;line-height:11px;font-weight:normal;color:#000;">61</div>
<div class="t" style="left:613.0px;width:160px;text-align:center;top:762.99px;font-size:11px;line-height:11px;font-weight:normal;color:#000;">0.00</div>
<div class="t" style="left:688.0px;width:160px;text-align:center;top:762.99px;font-size:11px;line-height:11px;font-weight:normal;color:#000;">7.2</div>
<div class="t" style="left:777.0px;width:160px;text-align:center;top:762.99px;font-size:11px;line-height:11px;font-weight:normal;color:#000;">15</div>
<div class="t" style="left:866.0px;width:160px;text-align:center;top:762.99px;font-size:11px;line-height:11px;font-weight:normal;color:#000;">1023</div>
<div class="a" style="left:33px;top:770px;width:1002px;height:1px;background:#ababab;"></div>
<div class="a" style="left:7px;top:770px;width:26px;height:1px;background:#c8c8c8;"></div>
<div class="a" style="left:1035px;top:32px;width:22px;height:739px;background:#e6e6e6;"></div>
<div class="a" style="left:1038px;top:49px;width:15px;height:706px;background:#d9d9d9;"></div>
<div class="a" style="left:1038px;top:755px;width:15px;height:15px;background:#fff;border:1px solid #b4b4b4"></div>
<svg style="left:1038px;top:755px" width="15" height="15"><path d="M3.5 6 H11.5 L7.5 10Z" fill="#777"/></svg>
<div class="a" style="left:7px;top:771px;width:1050px;height:27px;background:#e6e6e6;"></div>
<div class="a" style="left:7px;top:798px;width:1050px;height:1px;background:#fafafa;"></div>
<svg style="left:0;top:770px" width="80" height="27"><path d="M38 10 L34 13.5 L38 17Z" fill="#c3c3c3"/><path d="M63.5 10 L67.5 13.5 L63.5 17Z" fill="#c3c3c3"/></svg>
<div class="a" style="left:107px;top:770px;width:65px;height:25px;background:#fff;border-left:1px solid #ababab;border-right:1px solid #ababab"></div>
<div class="a" style="left:107px;top:793px;width:65px;height:2px;background:#217346;"></div>
<div class="t" style="left:107.5px;width:64px;text-align:center;top:777.52px;font-size:12.5px;line-height:12.5px;font-weight:bold;color:#1a6a3c;">Sheet1</div>
<svg style="left:200px;top:771px" width="26" height="26"><circle cx="13" cy="13" r="7.5" fill="none" stroke="#8c8c8c" stroke-width="1.1"/><path d="M9.3 13H16.7M13 9.3V16.7" stroke="#7a7a7a" stroke-width="1.6"/></svg>
<div class="a" style="left:636px;top:779px;width:2px;height:2px;background:#b0b0b0;"></div>
<div class="a" style="left:636px;top:783px;width:2px;height:2px;background:#b0b0b0;"></div>
<div class="a" style="left:636px;top:787px;width:2px;height:2px;background:#b0b0b0;"></div>
<div class="a" style="left:653px;top:777px;width:15px;height:15px;background:#fff;border:1px solid #b4b4b4"></div>
<svg style="left:653px;top:777px" width="15" height="15"><path d="M9.5 3.5 V11.5 L5.5 7.5Z" fill="#777"/></svg>
<div class="a" style="left:668px;top:777px;width:299px;height:15px;background:#fff;border:1px solid #b4b4b4"></div>
<div class="a" style="left:967px;top:777px;width:50px;height:15px;background:#d9d9d9;"></div>
<div class="a" style="left:1017px;top:777px;width:15px;height:15px;background:#fff;border:1px solid #b4b4b4"></div>
<svg style="left:1017px;top:777px" width="15" height="15"><path d="M5.5 3.5 V11.5 L9.5 7.5Z" fill="#777"/></svg>
<div class="a" style="left:7px;top:799px;width:1049px;height:19px;background:#f0f0f0;"></div>
<div class="t" style="left:20.3px;top:802.84px;font-size:12px;line-height:12px;font-weight:normal;color:#000;letter-spacing:0.1px;">Mapping</div>
<div class="a" style="left:79px;top:801px;width:1px;height:17px;background:#c9c6bc;"></div>
<div class="a" style="left:80px;top:801px;width:1px;height:17px;background:#ffffff;"></div>
<div class="t" style="left:94.3px;top:803.69px;font-size:11px;line-height:11px;font-weight:normal;color:#000;letter-spacing:-0.2px;">DB Query</div>
<div class="a" style="left:154px;top:801px;width:1px;height:17px;background:#c9c6bc;"></div>
<div class="a" style="left:155px;top:801px;width:1px;height:17px;background:#ffffff;"></div>
<div class="a" style="left:160px;top:799px;width:53px;height:18px;background:#ececec;border-top:2px solid #a5a39a;border-left:1px solid #a5a39a;border-right:1px solid #fff;border-bottom:1px solid #fff"></div>
<div class="t" style="left:168.2px;top:803.65px;font-size:11.4px;line-height:11.4px;font-weight:bold;color:#000;">Output</div>
<div class="a" style="left:217px;top:801px;width:1px;height:17px;background:#c9c6bc;"></div>
<div class="a" style="left:218px;top:801px;width:1px;height:17px;background:#ffffff;"></div>
<div class="a" style="left:6px;top:818px;width:1051px;height:1px;background:#8a8c9c;"></div>
<div class="a" style="left:5px;top:819px;width:150px;height:25px;background:#fdfdfd;border:1px solid #8c8c8c;border-top:none;border-radius:0 0 4px 4px"></div>
<svg style="left:8px;top:823px" width="18" height="18"><path d="M4.5 1.5H13.5V15.5H1.5V4.5Z" fill="#fff" stroke="#333"/><path d="M1.5 4.5H4.5V1.5Z" fill="#f0a020" stroke="#333" stroke-width="0.8"/><rect x="3" y="7" width="3" height="2" fill="none" stroke="#333" stroke-width="0.8"/><rect x="3" y="11" width="3" height="2" fill="none" stroke="#333" stroke-width="0.8"/><path d="M6 8H9M6 12H9" stroke="#5060d0" stroke-width="1"/><circle cx="12.5" cy="13" r="4.2" fill="#f5a000"/><path d="M10.8 11.5L12.5 13.5L14.2 11.5M12.5 13.5V15.5" stroke="#fff" stroke-width="1.1" fill="none"/></svg>
<div class="t" style="left:27.8px;top:827.19px;font-size:11px;line-height:11px;font-weight:bold;color:#000;letter-spacing:-0.08px;">port-forecast-excel.mfd</div>
<svg style="left:1000px;top:822px" width="60" height="22"><path d="M15.5 7.5 L10.5 11.5 L15.5 15.5Z" fill="none" stroke="#444" stroke-width="1"/><path d="M28.5 7.5 L33.5 11.5 L28.5 15.5Z" fill="none" stroke="#444" stroke-width="1"/><path d="M44.5 8 L51.5 15M51.5 8 L44.5 15" stroke="#222" stroke-width="1.5"/></svg>
<div class="a" style="left:167px;top:31px;width:888px;height:146px;background:#fff;border:1px solid #0078d7;border-top:none;box-shadow:2px 2px 2px rgba(0,0,0,0.28)"></div>
<svg style="left:171px;top:32px" width="17" height="17" shape-rendering="crispEdges"><path d="M3 0H14V15H0V3Z" fill="#fff"/><path d="M3 0H14V1H3ZM13 0H14V15H13ZM0 3H1V15H0ZM2 1H3V2H2ZM1 2H2V3H1ZM0 4H5V5H0ZM4 1H5V5H4ZM1 15H13V16H1Z" fill="#000"/><path d="M1 4L4 1V4Z" fill="#8fd48f" shape-rendering="auto"/><rect x="0" y="7" width="16" height="7" fill="#0c8f0c"/><path d="M1 8h1v1h-1ZM3 8h1v1h-1ZM1 9h1v1h-1ZM3 9h1v1h-1ZM2 10h1v1h-1ZM1 11h1v1h-1ZM3 11h1v1h-1ZM1 12h1v1h-1ZM3 12h1v1h-1ZM5 8h1v1h-1ZM5 9h1v1h-1ZM5 10h1v1h-1ZM5 11h1v1h-1ZM5 12h1v1h-1ZM6 12h1v1h-1ZM8 8h1v1h-1ZM9 8h1v1h-1ZM10 8h1v1h-1ZM8 9h1v1h-1ZM8 10h1v1h-1ZM9 10h1v1h-1ZM10 10h1v1h-1ZM10 11h1v1h-1ZM8 12h1v1h-1ZM9 12h1v1h-1ZM10 12h1v1h-1ZM12 8h1v1h-1ZM14 8h1v1h-1ZM12 9h1v1h-1ZM14 9h1v1h-1ZM13 10h1v1h-1ZM12 11h1v1h-1ZM14 11h1v1h-1ZM12 12h1v1h-1ZM14 12h1v1h-1Z" fill="#fff"/></svg>
<div class="t" style="left:190.8px;top:35.87px;font-size:11.5px;line-height:11.5px;font-weight:normal;color:#000;letter-spacing:-0.37px;">C:\JSON mapping\forecast-Shanghai.xlsx</div>
<svg style="left:171px;top:48px" width="17" height="17" shape-rendering="crispEdges"><path d="M3 0H14V15H0V3Z" fill="#fff"/><path d="M3 0H14V1H3ZM13 0H14V15H13ZM0 3H1V15H0ZM2 1H3V2H2ZM1 2H2V3H1ZM0 4H5V5H0ZM4 1H5V5H4ZM1 15H13V16H1Z" fill="#000"/><path d="M1 4L4 1V4Z" fill="#8fd48f" shape-rendering="auto"/><rect x="0" y="7" width="16" height="7" fill="#0c8f0c"/><path d="M1 8h1v1h-1ZM3 8h1v1h-1ZM1 9h1v1h-1ZM3 9h1v1h-1ZM2 10h1v1h-1ZM1 11h1v1h-1ZM3 11h1v1h-1ZM1 12h1v1h-1ZM3 12h1v1h-1ZM5 8h1v1h-1ZM5 9h1v1h-1ZM5 10h1v1h-1ZM5 11h1v1h-1ZM5 12h1v1h-1ZM6 12h1v1h-1ZM8 8h1v1h-1ZM9 8h1v1h-1ZM10 8h1v1h-1ZM8 9h1v1h-1ZM8 10h1v1h-1ZM9 10h1v1h-1ZM10 10h1v1h-1ZM10 11h1v1h-1ZM8 12h1v1h-1ZM9 12h1v1h-1ZM10 12h1v1h-1ZM12 8h1v1h-1ZM14 8h1v1h-1ZM12 9h1v1h-1ZM14 9h1v1h-1ZM13 10h1v1h-1ZM12 11h1v1h-1ZM14 11h1v1h-1ZM12 12h1v1h-1ZM14 12h1v1h-1Z" fill="#fff"/></svg>
<div class="t" style="left:190.8px;top:51.87px;font-size:11.5px;line-height:11.5px;font-weight:normal;color:#000;letter-spacing:-0.37px;">C:\JSON mapping\forecast-Shenzhen.xlsx</div>
<svg style="left:171px;top:64px" width="17" height="17" shape-rendering="crispEdges"><path d="M3 0H14V15H0V3Z" fill="#fff"/><path d="M3 0H14V1H3ZM13 0H14V15H13ZM0 3H1V15H0ZM2 1H3V2H2ZM1 2H2V3H1ZM0 4H5V5H0ZM4 1H5V5H4ZM1 15H13V16H1Z" fill="#000"/><path d="M1 4L4 1V4Z" fill="#8fd48f" shape-rendering="auto"/><rect x="0" y="7" width="16" height="7" fill="#0c8f0c"/><path d="M1 8h1v1h-1ZM3 8h1v1h-1ZM1 9h1v1h-1ZM3 9h1v1h-1ZM2 10h1v1h-1ZM1 11h1v1h-1ZM3 11h1v1h-1ZM1 12h1v1h-1ZM3 12h1v1h-1ZM5 8h1v1h-1ZM5 9h1v1h-1ZM5 10h1v1h-1ZM5 11h1v1h-1ZM5 12h1v1h-1ZM6 12h1v1h-1ZM8 8h1v1h-1ZM9 8h1v1h-1ZM10 8h1v1h-1ZM8 9h1v1h-1ZM8 10h1v1h-1ZM9 10h1v1h-1ZM10 10h1v1h-1ZM10 11h1v1h-1ZM8 12h1v1h-1ZM9 12h1v1h-1ZM10 12h1v1h-1ZM12 8h1v1h-1ZM14 8h1v1h-1ZM12 9h1v1h-1ZM14 9h1v1h-1ZM13 10h1v1h-1ZM12 11h1v1h-1ZM14 11h1v1h-1ZM12 12h1v1h-1ZM14 12h1v1h-1Z" fill="#fff"/></svg>
<div class="t" style="left:190.8px;top:67.87px;font-size:11.5px;line-height:11.5px;font-weight:normal;color:#000;letter-spacing:-0.37px;">C:\JSON mapping\forecast-Busan.xlsx</div>
<svg style="left:171px;top:80px" width="17" height="17" shape-rendering="crispEdges"><path d="M3 0H14V15H0V3Z" fill="#fff"/><path d="M3 0H14V1H3ZM13 0H14V15H13ZM0 3H1V15H0ZM2 1H3V2H2ZM1 2H2V3H1ZM0 4H5V5H0ZM4 1H5V5H4ZM1 15H13V16H1Z" fill="#000"/><path d="M1 4L4 1V4Z" fill="#8fd48f" shape-rendering="auto"/><rect x="0" y="7" width="16" height="7" fill="#0c8f0c"/><path d="M1 8h1v1h-1ZM3 8h1v1h-1ZM1 9h1v1h-1ZM3 9h1v1h-1ZM2 10h1v1h-1ZM1 11h1v1h-1ZM3 11h1v1h-1ZM1 12h1v1h-1ZM3 12h1v1h-1ZM5 8h1v1h-1ZM5 9h1v1h-1ZM5 10h1v1h-1ZM5 11h1v1h-1ZM5 12h1v1h-1ZM6 12h1v1h-1ZM8 8h1v1h-1ZM9 8h1v1h-1ZM10 8h1v1h-1ZM8 9h1v1h-1ZM8 10h1v1h-1ZM9 10h1v1h-1ZM10 10h1v1h-1ZM10 11h1v1h-1ZM8 12h1v1h-1ZM9 12h1v1h-1ZM10 12h1v1h-1ZM12 8h1v1h-1ZM14 8h1v1h-1ZM12 9h1v1h-1ZM14 9h1v1h-1ZM13 10h1v1h-1ZM12 11h1v1h-1ZM14 11h1v1h-1ZM12 12h1v1h-1ZM14 12h1v1h-1Z" fill="#fff"/></svg>
<div class="t" style="left:190.8px;top:83.87px;font-size:11.5px;line-height:11.5px;font-weight:normal;color:#000;letter-spacing:-0.37px;">C:\JSON mapping\forecast-Tokyo.xlsx</div>
<svg style="left:171px;top:96px" width="17" height="17" shape-rendering="crispEdges"><path d="M3 0H14V15H0V3Z" fill="#fff"/><path d="M3 0H14V1H3ZM13 0H14V15H13ZM0 3H1V15H0ZM2 1H3V2H2ZM1 2H2V3H1ZM0 4H5V5H0ZM4 1H5V5H4ZM1 15H13V16H1Z" fill="#000"/><path d="M1 4L4 1V4Z" fill="#8fd48f" shape-rendering="auto"/><rect x="0" y="7" width="16" height="7" fill="#0c8f0c"/><path d="M1 8h1v1h-1ZM3 8h1v1h-1ZM1 9h1v1h-1ZM3 9h1v1h-1ZM2 10h1v1h-1ZM1 11h1v1h-1ZM3 11h1v1h-1ZM1 12h1v1h-1ZM3 12h1v1h-1ZM5 8h1v1h-1ZM5 9h1v1h-1ZM5 10h1v1h-1ZM5 11h1v1h-1ZM5 12h1v1h-1ZM6 12h1v1h-1ZM8 8h1v1h-1ZM9 8h1v1h-1ZM10 8h1v1h-1ZM8 9h1v1h-1ZM8 10h1v1h-1ZM9 10h1v1h-1ZM10 10h1v1h-1ZM10 11h1v1h-1ZM8 12h1v1h-1ZM9 12h1v1h-1ZM10 12h1v1h-1ZM12 8h1v1h-1ZM14 8h1v1h-1ZM12 9h1v1h-1ZM14 9h1v1h-1ZM13 10h1v1h-1ZM12 11h1v1h-1ZM14 11h1v1h-1ZM12 12h1v1h-1ZM14 12h1v1h-1Z" fill="#fff"/></svg>
<div class="t" style="left:190.8px;top:99.87px;font-size:11.5px;line-height:11.5px;font-weight:normal;color:#000;letter-spacing:-0.37px;">C:\JSON mapping\forecast-Long Beach.xlsx</div>
<svg style="left:171px;top:112px" width="17" height="17" shape-rendering="crispEdges"><path d="M3 0H14V15H0V3Z" fill="#fff"/><path d="M3 0H14V1H3ZM13 0H14V15H13ZM0 3H1V15H0ZM2 1H3V2H2ZM1 2H2V3H1ZM0 4H5V5H0ZM4 1H5V5H4ZM1 15H13V16H1Z" fill="#000"/><path d="M1 4L4 1V4Z" fill="#8fd48f" shape-rendering="auto"/><rect x="0" y="7" width="16" height="7" fill="#0c8f0c"/><path d="M1 8h1v1h-1ZM3 8h1v1h-1ZM1 9h1v1h-1ZM3 9h1v1h-1ZM2 10h1v1h-1ZM1 11h1v1h-1ZM3 11h1v1h-1ZM1 12h1v1h-1ZM3 12h1v1h-1ZM5 8h1v1h-1ZM5 9h1v1h-1ZM5 10h1v1h-1ZM5 11h1v1h-1ZM5 12h1v1h-1ZM6 12h1v1h-1ZM8 8h1v1h-1ZM9 8h1v1h-1ZM10 8h1v1h-1ZM8 9h1v1h-1ZM8 10h1v1h-1ZM9 10h1v1h-1ZM10 10h1v1h-1ZM10 11h1v1h-1ZM8 12h1v1h-1ZM9 12h1v1h-1ZM10 12h1v1h-1ZM12 8h1v1h-1ZM14 8h1v1h-1ZM12 9h1v1h-1ZM14 9h1v1h-1ZM13 10h1v1h-1ZM12 11h1v1h-1ZM14 11h1v1h-1ZM12 12h1v1h-1ZM14 12h1v1h-1Z" fill="#fff"/></svg>
<div class="t" style="left:190.8px;top:115.87px;font-size:11.5px;line-height:11.5px;font-weight:normal;color:#000;letter-spacing:-0.37px;">C:\JSON mapping\forecast-Oakland.xlsx</div>
<div class="a" style="left:169px;top:128px;width:885px;height:16px;background:#0078d7;"></div>
<div class="a" style="left:169px;top:128px;width:885px;height:16px;border:1px dotted #ff9a2e;border-right:none"></div>
<svg style="left:171px;top:128px" width="17" height="17" shape-rendering="crispEdges"><path d="M3 0H14V15H0V3Z" fill="#c4def5"/><path d="M3 0H14V1H3ZM13 0H14V15H13ZM0 3H1V15H0ZM2 1H3V2H2ZM1 2H2V3H1ZM0 4H5V5H0ZM4 1H5V5H4ZM1 15H13V16H1Z" fill="#000"/><path d="M1 4L4 1V4Z" fill="#8fd48f" shape-rendering="auto"/><rect x="0" y="7" width="16" height="7" fill="#0c8f0c"/><path d="M1 8h1v1h-1ZM3 8h1v1h-1ZM1 9h1v1h-1ZM3 9h1v1h-1ZM2 10h1v1h-1ZM1 11h1v1h-1ZM3 11h1v1h-1ZM1 12h1v1h-1ZM3 12h1v1h-1ZM5 8h1v1h-1ZM5 9h1v1h-1ZM5 10h1v1h-1ZM5 11h1v1h-1ZM5 12h1v1h-1ZM6 12h1v1h-1ZM8 8h1v1h-1ZM9 8h1v1h-1ZM10 8h1v1h-1ZM8 9h1v1h-1ZM8 10h1v1h-1ZM9 10h1v1h-1ZM10 10h1v1h-1ZM10 11h1v1h-1ZM8 12h1v1h-1ZM9 12h1v1h-1ZM10 12h1v1h-1ZM12 8h1v1h-1ZM14 8h1v1h-1ZM12 9h1v1h-1ZM14 9h1v1h-1ZM13 10h1v1h-1ZM12 11h1v1h-1ZM14 11h1v1h-1ZM12 12h1v1h-1ZM14 12h1v1h-1Z" fill="#fff"/></svg>
<div class="t" style="left:190.8px;top:131.87px;font-size:11.5px;line-height:11.5px;font-weight:normal;color:#fff;letter-spacing:-0.37px;">C:\JSON mapping\forecast-Seattle.xlsx</div>
<svg style="left:171px;top:144px" width="17" height="17" shape-rendering="crispEdges"><path d="M3 0H14V15H0V3Z" fill="#fff"/><path d="M3 0H14V1H3ZM13 0H14V15H13ZM0 3H1V15H0ZM2 1H3V2H2ZM1 2H2V3H1ZM0 4H5V5H0ZM4 1H5V5H4ZM1 15H13V16H1Z" fill="#000"/><path d="M1 4L4 1V4Z" fill="#8fd48f" shape-rendering="auto"/><rect x="0" y="7" width="16" height="7" fill="#0c8f0c"/><path d="M1 8h1v1h-1ZM3 8h1v1h-1ZM1 9h1v1h-1ZM3 9h1v1h-1ZM2 10h1v1h-1ZM1 11h1v1h-1ZM3 11h1v1h-1ZM1 12h1v1h-1ZM3 12h1v1h-1ZM5 8h1v1h-1ZM5 9h1v1h-1ZM5 10h1v1h-1ZM5 11h1v1h-1ZM5 12h1v1h-1ZM6 12h1v1h-1ZM8 8h1v1h-1ZM9 8h1v1h-1ZM10 8h1v1h-1ZM8 9h1v1h-1ZM8 10h1v1h-1ZM9 10h1v1h-1ZM10 10h1v1h-1ZM10 11h1v1h-1ZM8 12h1v1h-1ZM9 12h1v1h-1ZM10 12h1v1h-1ZM12 8h1v1h-1ZM14 8h1v1h-1ZM12 9h1v1h-1ZM14 9h1v1h-1ZM13 10h1v1h-1ZM12 11h1v1h-1ZM14 11h1v1h-1ZM12 12h1v1h-1ZM14 12h1v1h-1Z" fill="#fff"/></svg>
<div class="t" style="left:190.8px;top:147.87px;font-size:11.5px;line-height:11.5px;font-weight:normal;color:#000;letter-spacing:-0.37px;">C:\JSON mapping\forecast-Vancouver.xlsx</div>
<svg style="left:171px;top:160px" width="17" height="17" shape-rendering="crispEdges"><path d="M3 0H14V15H0V3Z" fill="#fff"/><path d="M3 0H14V1H3ZM13 0H14V15H13ZM0 3H1V15H0ZM2 1H3V2H2ZM1 2H2V3H1ZM0 4H5V5H0ZM4 1H5V5H4ZM1 15H13V16H1Z" fill="#000"/><path d="M1 4L4 1V4Z" fill="#8fd48f" shape-rendering="auto"/><rect x="0" y="7" width="16" height="7" fill="#0c8f0c"/><path d="M1 8h1v1h-1ZM3 8h1v1h-1ZM1 9h1v1h-1ZM3 9h1v1h-1ZM2 10h1v1h-1ZM1 11h1v1h-1ZM3 11h1v1h-1ZM1 12h1v1h-1ZM3 12h1v1h-1ZM5 8h1v1h-1ZM5 9h1v1h-1ZM5 10h1v1h-1ZM5 11h1v1h-1ZM5 12h1v1h-1ZM6 12h1v1h-1ZM8 8h1v1h-1ZM9 8h1v1h-1ZM10 8h1v1h-1ZM8 9h1v1h-1ZM8 10h1v1h-1ZM9 10h1v1h-1ZM10 10h1v1h-1ZM10 11h1v1h-1ZM8 12h1v1h-1ZM9 12h1v1h-1ZM10 12h1v1h-1ZM12 8h1v1h-1ZM14 8h1v1h-1ZM12 9h1v1h-1ZM14 9h1v1h-1ZM13 10h1v1h-1ZM12 11h1v1h-1ZM14 11h1v1h-1ZM12 12h1v1h-1ZM14 12h1v1h-1Z" fill="#fff"/></svg>
<div class="t" style="left:190.8px;top:163.87px;font-size:11.5px;line-height:11.5px;font-weight:normal;color:#000;letter-spacing:-0.37px;">C:\JSON mapping\forecast-Anchorage.xlsx</div>
<div class="a" style="left:167px;top:9px;width:888px;height:23px;background:#cce4f7;border:1px solid #0050a0;border-bottom:2px solid #0054a8"></div>
<div class="a" style="left:168px;top:29px;width:886px;height:1px;background:#d8ebfa;"></div>
<svg style="left:170px;top:12px" width="17" height="17" shape-rendering="crispEdges"><path d="M3 0H14V15H0V3Z" fill="#fff"/><path d="M3 0H14V1H3ZM13 0H14V15H13ZM0 3H1V15H0ZM2 1H3V2H2ZM1 2H2V3H1ZM0 4H5V5H0ZM4 1H5V5H4ZM1 15H13V16H1Z" fill="#000"/><path d="M1 4L4 1V4Z" fill="#8fd48f" shape-rendering="auto"/><rect x="0" y="7" width="16" height="7" fill="#0c8f0c"/><path d="M1 8h1v1h-1ZM3 8h1v1h-1ZM1 9h1v1h-1ZM3 9h1v1h-1ZM2 10h1v1h-1ZM1 11h1v1h-1ZM3 11h1v1h-1ZM1 12h1v1h-1ZM3 12h1v1h-1ZM5 8h1v1h-1ZM5 9h1v1h-1ZM5 10h1v1h-1ZM5 11h1v1h-1ZM5 12h1v1h-1ZM6 12h1v1h-1ZM8 8h1v1h-1ZM9 8h1v1h-1ZM10 8h1v1h-1ZM8 9h1v1h-1ZM8 10h1v1h-1ZM9 10h1v1h-1ZM10 10h1v1h-1ZM10 11h1v1h-1ZM8 12h1v1h-1ZM9 12h1v1h-1ZM10 12h1v1h-1ZM12 8h1v1h-1ZM14 8h1v1h-1ZM12 9h1v1h-1ZM14 9h1v1h-1ZM13 10h1v1h-1ZM12 11h1v1h-1ZM14 11h1v1h-1ZM12 12h1v1h-1ZM14 12h1v1h-1Z" fill="#fff"/></svg>
<div class="t" style="left:189.8px;top:15.57px;font-size:11.5px;line-height:11.5px;font-weight:normal;color:#000;letter-spacing:-0.37px;">C:\JSON mapping\forecast-Seattle.xlsx</div>
<svg style="left:1040px;top:15px" width="14" height="12"><path d="M2.3 3.7 L6.3 7.7 L10.3 3.7" fill="none" stroke="#3c3c3c" stroke-width="1.3"/></svg>
<svg style="left:459px;top:137px" width="14" height="21"><path d="M0.5 0.5V16.5L4.5 12.7L7.3 18.8L9.6 17.8L6.9 11.8H11.8Z" fill="#fff" stroke="#000" stroke-width="1" stroke-linejoin="miter"/></svg>
</body></html>
